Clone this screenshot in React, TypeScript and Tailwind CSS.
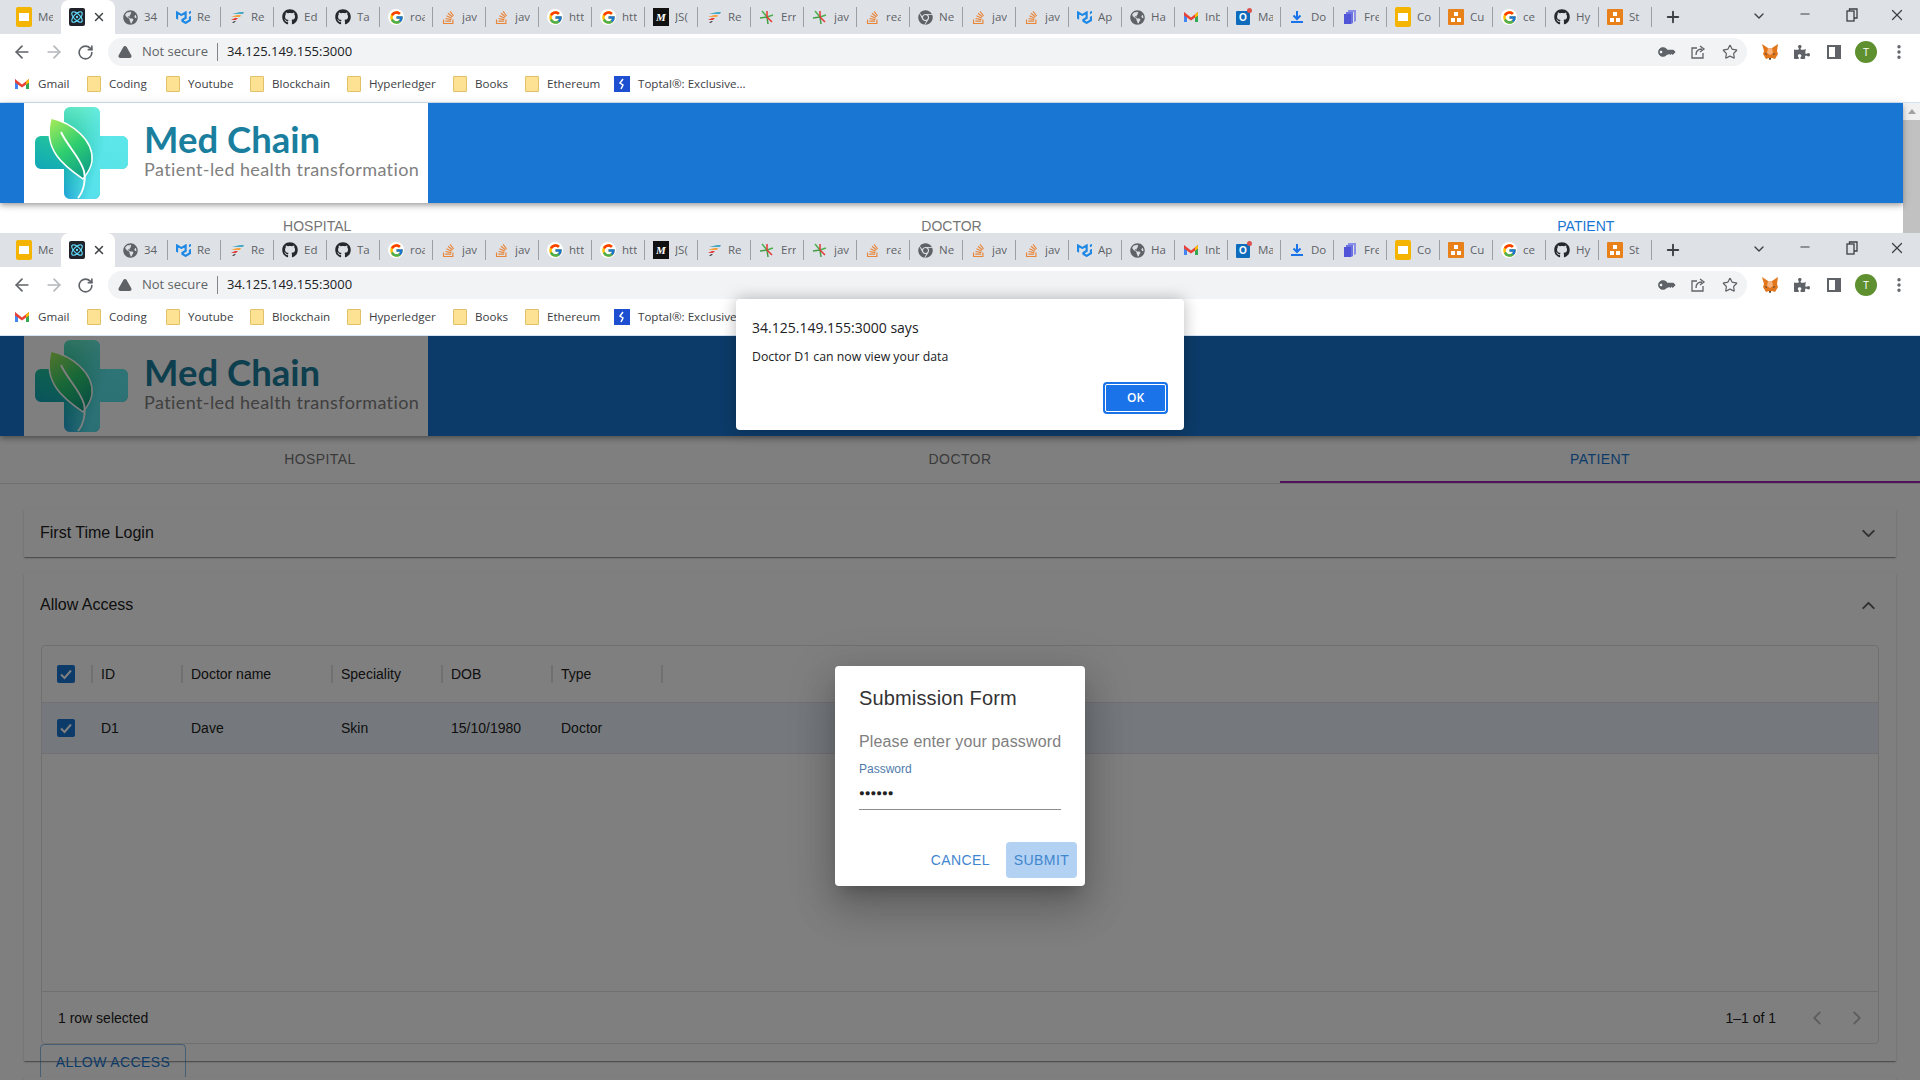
import React from 'react';
import { ArrowLeft, ArrowRight, Atom, ChevronDown, ChevronLeft, ChevronRight, ChevronUp, EllipsisVertical, Minus, Plus, RotateCw, Star, TriangleAlert, X } from 'lucide-react';
import { FaChrome, FaGithub, FaGlobeAmericas, FaKey, FaPuzzlePiece, FaStackOverflow } from 'react-icons/fa';
import { FcGoogle } from 'react-icons/fc';
import { SiMui } from 'react-icons/si';

const tabs: [string, string][] = [
    ['slides', 'Me'], ['react', ''], ['globe', '34'], ['mui', 'Re'], ['flag', 'Re'], ['github', 'Ed'], ['github', 'Ta'], ['google', 'roa'],
    ['so', 'jav'], ['so', 'jav'], ['google', 'htt'], ['google', 'htt'], ['medium', 'JS('], ['flag', 'Re'], ['spark', 'Err'], ['spark', 'jav'],
    ['so', 'rea'], ['chrome', 'Ne'], ['so', 'jav'], ['so', 'jav'], ['mui', 'Ap'], ['globe', 'Ha'], ['gmail', 'Inb'], ['outlook', 'Ma'],
    ['download', 'Do'], ['stack', 'Fre'], ['slides', 'Co'], ['blocks', 'Cu'], ['google', 'ce'], ['github', 'Hy'], ['blocks', 'St'],
];

const bookmarks = [
    { label: 'Coding', width: 'w-[79px]' },
    { label: 'Youtube', width: 'w-[84px]' },
    { label: 'Blockchain', width: 'w-[97px]' },
    { label: 'Hyperledger', width: 'w-[106px]' },
    { label: 'Books', width: 'w-[72px]' },
    { label: 'Ethereum', width: 'w-[89px]' },
];

function GmailIcon() {
    return (
        <svg viewBox="0 0 16 16" className="w-4 h-4">
            <path d="M1 3v10h3V7z" fill="#4285f4" />
            <path d="M15 3v10h-3V7z" fill="#34a853" />
            <path d="M1 3l7 5.500L15 3v3.500l-7 5-7-5z" fill="#ea4335" />
            <path d="M12 5.500L15 3v3.500l-3 2.200z" fill="#fbbc04" />
        </svg>
    );
}

function Favicon({ kind }: { kind: string }) {
    switch (kind) {
        case 'slides':
            return <div className="w-4 h-5 rounded-[2px] bg-[#f4b400] flex items-center justify-center"><div className="w-[10px] h-2 bg-white" /></div>;
        case 'react':
            return <div className="w-4 h-[18px] rounded-[2px] bg-[#20232a] flex items-center justify-center"><Atom size={14} color="#61dafb" /></div>;
        case 'globe':
            return <FaGlobeAmericas size={15} color="#5f6368" />;
        case 'mui':
            return <SiMui size={15} color="#1e88e5" />;
        case 'flag':
            return (
                <svg viewBox="0 0 16 16" className="w-4 h-4">
                    <path d="M3 5l8-2h4l-1 2z" fill="#48a9c5" />
                    <path d="M2 8l6-2h4l-1 2z" fill="#f4a340" />
                    <path d="M2 11l4-2h3l-2 2z" fill="#e53935" />
                    <path d="M3 14l2-2h2l-2 2z" fill="#555555" />
                </svg>
            );
        case 'github':
            return <FaGithub size={16} color="#24292e" />;
        case 'google':
            return <div className="w-4 h-4 rounded-full bg-white flex items-center justify-center"><FcGoogle size={15} /></div>;
        case 'so':
            return <FaStackOverflow size={15} color="#e8863a" />;
        case 'medium':
            return <div className="w-4 h-[18px] bg-[#111111] flex items-center justify-center text-white text-[11px] italic font-bold font-['Liberation_Serif',serif]">M</div>;
        case 'spark':
            return (
                <svg viewBox="0 0 16 16" className="w-4 h-4" fill="none" strokeWidth="1.500">
                    <path d="M8 8L3 2M8 8l6-2" stroke="#4caf50" />
                    <path d="M8 8L1 9M8 8l1 7" stroke="#43a047" />
                    <path d="M8 8l5 5M8 8L8 2" stroke="#e53935" />
                </svg>
            );
        case 'chrome':
            return <FaChrome size={15} color="#5f6368" />;
        case 'gmail':
            return <GmailIcon />;
        case 'outlook':
            return (
                <div className="w-4 h-4 relative">
                    <div className="w-[14px] h-[14px] mt-[2px] bg-[#0f6cbd] rounded-[1px] text-white text-[10px] font-bold leading-[14px] text-center font-['Liberation_Sans',sans-serif]">O</div>
                    <div className="absolute -top-px right-0 w-[5px] h-[5px] rounded-full bg-[#d9534f]" />
                </div>
            );
        case 'download':
            return (
                <svg viewBox="0 0 16 16" className="w-4 h-4">
                    <path d="M8 2v7M4.500 6.500L8 10l3.500-3.500" fill="none" stroke="#1a73e8" strokeWidth="2" />
                    <path d="M2 13h12" stroke="#1a73e8" strokeWidth="2" />
                </svg>
            );
        case 'stack':
            return (
                <svg viewBox="0 0 16 16" className="w-4 h-4">
                    <path d="M6 1h8v11l-2 1V3H6z" fill="#8a8fe8" />
                    <path d="M4 3h7v11l-2 1V5H4z" fill="#6d72e0" />
                    <rect x="2" y="5" width="7" height="10" fill="#4f55d6" />
                </svg>
            );
        case 'blocks':
            return (
                <svg viewBox="0 0 16 16" className="w-4 h-[18px]">
                    <rect width="16" height="16" rx="1" fill="#e8811a" />
                    <path d="M6 3h4v4H6zM3 9h4v4H3zM9 9h4v4H9z" fill="#ffffff" />
                </svg>
            );
        default:
            return null;
    }
}

function TabStrip() {
    return (
        <div className="h-[34px] bg-[#dee1e6] flex pl-2">
            {tabs.map(([kind, title], i) => {
                const active = kind === 'react';
                const beforeActive = i === 0;
                return (
                    <div key={i} className={active ? 'w-[54px] h-[34px] shrink-0 bg-white rounded-t-lg flex items-center pl-2' : 'w-[53px] h-[34px] shrink-0 flex items-center pl-2 relative'}>
                        <Favicon kind={kind} />
                        {active ? (
                            <X size={14} strokeWidth={2.500} className="ml-[7px] text-[#3c4043]" />
                        ) : (
                            <span className="ml-[6px] w-[15px] overflow-hidden whitespace-nowrap text-[11.500px] text-[#5f6368] font-['Open_Sans',sans-serif]">{title}</span>
                        )}
                        {!active && !beforeActive && <div className="absolute right-0 top-[7px] w-px h-5 bg-[#9aa0a6]" />}
                    </div>
                );
            })}
            <div className="w-9 ml-[3px] flex items-center justify-center">
                <Plus size={18} strokeWidth={2.500} className="text-[#3c4043]" />
            </div>
            <div className="ml-auto flex text-[#3c4043]">
                <div className="w-[46px] flex justify-center pt-2"><ChevronDown size={16} /></div>
                <div className="w-[46px] flex justify-center pt-[7px]"><Minus size={14} /></div>
                <div className="w-[46px] flex justify-center pt-2">
                    <svg viewBox="0 0 12 14" className="w-3 h-[14px] ml-[1px]" fill="none" stroke="#3c4043" strokeWidth="1.300">
                        <rect x="1" y="3" width="7" height="10" />
                        <path d="M3.500 3V1H11v9H8" />
                    </svg>
                </div>
                <div className="w-[46px] flex justify-center pt-[6px]"><X size={18} strokeWidth={1.600} /></div>
            </div>
        </div>
    );
}

function FoxIcon() {
    return (
        <svg viewBox="0 0 18 18" className="w-[18px] h-[18px]">
            <path d="M1 1l6 4h4l6-4-1 7 1 3-3 5-3-1H8l-3 1-3-5 1-3z" fill="#e2761b" />
            <path d="M7 5h4l1 5-3 2-3-2z" fill="#f6b27a" />
            <path d="M8 15h2l-.500 2h-1z" fill="#3c2a1d" />
            <path d="M4 10l2 1-1 1zM14 10l-2 1 1 1z" fill="#233447" />
        </svg>
    );
}

function Toolbar() {
    return (
        <div className="h-9 bg-white flex items-center">
            <div className="w-[108px] shrink-0 flex items-center pl-3 gap-[12px]">
                <ArrowLeft size={20} className="text-[#5f6368]" />
                <ArrowRight size={20} className="text-[#b4b7bb]" />
                <RotateCw size={17} strokeWidth={2.300} className="text-[#5f6368] ml-[1px]" />
            </div>
            <div className="w-[1639px] h-7 shrink-0 rounded-full bg-[#f1f3f4] flex items-center pl-[10px] pr-[9px] font-['Open_Sans',sans-serif]">
                <TriangleAlert size={14} strokeWidth={2.500} fill="#5f6368" className="text-[#5f6368]" />
                <span className="ml-[10px] w-[67px] text-[13px] text-[#5f6368] whitespace-nowrap">Not secure</span>
                <div className="ml-2 w-px h-[18px] bg-[#80868b]" />
                <span className="ml-[9px] text-[13px] text-[#202124] whitespace-nowrap">34.125.149.155:3000</span>
                <div className="ml-auto flex items-center gap-4 text-[#5f6368]">
                    <FaKey size={14} className="-scale-x-100 -rotate-45 -ml-[2px] mr-[1px]" />
                    <svg viewBox="0 0 16 16" className="w-4 h-4" fill="none" stroke="#5f6368" strokeWidth="1.300">
                        <path d="M13 9v5H2V4h5" />
                        <path d="M6 11c0-4 2-6 6-6M10 2l4 3-4 3" />
                    </svg>
                    <Star size={16} strokeWidth={1.800} />
                </div>
            </div>
            <div className="flex-1 flex items-center pl-[14px] gap-[15px] text-[#5f6368]">
                <FoxIcon />
                <FaPuzzlePiece size={16} />
                <svg viewBox="0 0 16 16" className="w-4 h-4 ml-[1px]" fill="none">
                    <rect x="2" y="2" width="12" height="12" stroke="#5f6368" strokeWidth="2" />
                    <rect x="9" y="2" width="5" height="12" fill="#5f6368" />
                </svg>
                <div className="w-[22px] h-[22px] -ml-[2px] rounded-full bg-[#5e9030] text-white text-[11px] flex items-center justify-center font-['Open_Sans',sans-serif]">T</div>
                <EllipsisVertical size={18} strokeWidth={2.500} className="-ml-[2px]" />
            </div>
        </div>
    );
}

function BookmarksBar() {
    return (
        <div className="h-[33px] pb-[4px] bg-white border-b border-[#d4e4f5] flex items-center pl-[14px] text-[11.600px] text-[#3c4043] font-['Open_Sans',sans-serif] whitespace-nowrap">
            <div className="w-[73px] flex items-center gap-[8px]"><GmailIcon /><span>Gmail</span></div>
            {bookmarks.map((b) => (
                <div key={b.label} className={`${b.width} flex items-center gap-2`}>
                    <div className="w-[14px] h-4 bg-[#fde293] border border-[#e0c068] rounded-[1px]" />
                    <span>{b.label}</span>
                </div>
            ))}
            <div className="flex items-center gap-2">
                <div className="w-4 h-4 bg-[#1f4fd1] flex items-center justify-center">
                    <svg viewBox="0 0 16 16" className="w-4 h-4" fill="none" stroke="#ffffff" strokeWidth="1.500">
                        <path d="M9 3L6 7l3 2-2 4" />
                    </svg>
                </div>
                <span>Toptal®: Exclusive...</span>
            </div>
        </div>
    );
}

const crossPath = 'M36 0h24a6 6 0 0 1 6 6v23h22a6 6 0 0 1 6 6v21a6 6 0 0 1-6 6H66v24a6 6 0 0 1-6 6H36a6 6 0 0 1-6-6V62H7a6 6 0 0 1-6-6V35a6 6 0 0 1 6-6h23V6a6 6 0 0 1 6-6z';

function Logo({ id }: { id: string }) {
    return (
        <div className="ml-6 w-[404px] h-[100px] bg-white flex items-center pl-[10px]">
            <svg viewBox="0 0 94 92" className="w-[94px] h-[92px] shrink-0">
                <defs>
                    <linearGradient id={`${id}-cross`} x1="0.700" y1="0" x2="0.300" y2="1">
                        <stop offset="0" stopColor="#6ff0d0" />
                        <stop offset="0.500" stopColor="#1fc0a0" />
                        <stop offset="0.800" stopColor="#12a8b8" />
                        <stop offset="1" stopColor="#0a86d0" />
                    </linearGradient>
                    <linearGradient id={`${id}-glow`} x1="0" y1="0" x2="1" y2="0.300">
                        <stop offset="0.450" stopColor="#5fe8f0" stopOpacity="0" />
                        <stop offset="0.800" stopColor="#5fe8f0" stopOpacity="0.900" />
                    </linearGradient>
                    <linearGradient id={`${id}-leaf`} x1="0.200" y1="0" x2="0.700" y2="1">
                        <stop offset="0" stopColor="#9be85a" />
                        <stop offset="0.500" stopColor="#2fcf70" />
                        <stop offset="1" stopColor="#0fa088" />
                    </linearGradient>
                </defs>
                <path d={crossPath} fill={`url(#${id}-cross)`} />
                <path d={crossPath} fill={`url(#${id}-glow)`} />
                <path d="M17 11C38 16 60 33 58 54 57 62 53 67 49 72 32 60 8 44 17 11z" fill={`url(#${id}-leaf)`} stroke="#ffffff" strokeWidth="1.500" />
                <path d="M27 25C34 40 46 50 50 64 52 72 50 84 44 91" fill="none" stroke="#ffffff" strokeWidth="1.800" />
            </svg>
            <div className="ml-4 -mt-[8px] font-['Lato',sans-serif]">
                <div className="text-[36.500px] leading-[40px] font-bold text-[#1a7f9e] whitespace-nowrap">Med Chain</div>
                <div className="text-[18px] leading-[20px] tracking-[0.4px] text-[#808080] whitespace-nowrap">Patient-led health transformation</div>
            </div>
        </div>
    );
}

function PageHeader({ id }: { id: string }) {
    return (
        <div className="h-[100px] bg-[#1976d2] flex shadow-[0_2px_4px_-1px_rgba(0,0,0,0.2),0_4px_5px_0_rgba(0,0,0,0.14),0_1px_10px_0_rgba(0,0,0,0.12)] relative">
            <Logo id={id} />
        </div>
    );
}

function NavTabs({ short }: { short?: boolean }) {
    return (
        <div className={short ? 'flex h-[30px] pt-[13px] text-sm leading-5 text-[#757575]' : 'flex h-12 items-center pb-[2px] border-b border-[#e0e0e0] text-sm text-[#757575] tracking-[0.4px] relative'}>
            <div className="flex-1 text-center">HOSPITAL</div>
            <div className="flex-1 text-center">DOCTOR</div>
            <div className="flex-1 text-center text-[#1976d2]">PATIENT</div>
            {!short && <div className="absolute right-0 bottom-0 w-1/3 h-[2px] bg-[#9c27b0]" />}
        </div>
    );
}

const paperShadow = 'shadow-[0_2px_1px_-1px_rgba(0,0,0,0.2),0_1px_1px_0_rgba(0,0,0,0.14),0_1px_3px_0_rgba(0,0,0,0.12)]';

function CheckBox() {
    return (
        <div className="w-[18px] h-[18px] rounded-[2px] bg-[#1976d2] flex items-center justify-center">
            <svg viewBox="0 0 18 18" className="w-[18px] h-[18px]" fill="none" stroke="#ffffff" strokeWidth="2">
                <path d="M4 9.500l3.500 3.500L14 5.500" />
            </svg>
        </div>
    );
}

const columns = [
    { title: 'ID', value: 'D1', width: 'w-[90px]' },
    { title: 'Doctor name', value: 'Dave', width: 'w-[150px]' },
    { title: 'Speciality', value: 'Skin', width: 'w-[110px]' },
    { title: 'DOB', value: '15/10/1980', width: 'w-[110px]' },
    { title: 'Type', value: 'Doctor', width: 'w-[110px]' },
];

function AccessTable() {
    return (
        <div className="mx-[17px] h-[399px] border border-[#e0e0e0] rounded flex flex-col text-sm text-[#212121]">
            <div className="h-[57px] flex items-center border-b border-[#e0e0e0]">
                <div className="w-[49px] pl-[15px]"><CheckBox /></div>
                {columns.map((c) => (
                    <div key={c.title} className={`${c.width} h-[18px] border-l-2 border-[#e0e0e0] pl-[8px] leading-[18px]`}>{c.title}</div>
                ))}
                <div className="h-[18px] border-l-2 border-[#e0e0e0]" />
            </div>
            <div className="h-[51px] flex items-center border-b border-[#e0e0e0] bg-[#ebf3fb]">
                <div className="w-[49px] pl-[15px]"><CheckBox /></div>
                {columns.map((c) => (
                    <div key={c.title} className={`${c.width} pl-[10px] -mt-px`}>{c.value}</div>
                ))}
            </div>
            <div className="flex-1" />
            <div className="h-[52px] border-t border-[#e0e0e0] flex items-center pl-4 pr-[10px]">
                <span>1 row selected</span>
                <span className="ml-auto">1–1 of 1</span>
                <ChevronLeft size={22} className="ml-[30px] text-[#bdbdbd]" />
                <ChevronRight size={22} className="ml-[18px] text-[#bdbdbd]" />
            </div>
        </div>
    );
}

function PatientPanel() {
    return (
        <div className="px-6 pt-[25px]">
            <div className={`h-12 bg-white flex items-center justify-between pl-4 pr-[17px] text-base text-[#212121] ${paperShadow}`}>
                <span>First Time Login</span>
                <ChevronDown size={21} strokeWidth={2.200} className="text-[#616161]" />
            </div>
            <div className={`mt-4 h-[488px] bg-white ${paperShadow}`}>
                <div className="h-[72px] flex items-center justify-between pl-4 pr-[17px] text-base text-[#212121]">
                    <span className="-mt-[9px]">Allow Access</span>
                    <ChevronUp size={21} strokeWidth={2.200} className="-mt-[8px] text-[#616161]" />
                </div>
                <AccessTable />
                <div className="ml-4 w-[146px] h-9 border border-[#1976d280] rounded flex items-center justify-center text-sm text-[#1976d2] tracking-[0.4px]">
                    ALLOW ACCESS
                </div>
            </div>
            <div className={`mt-4 h-12 bg-white ${paperShadow}`} />
        </div>
    );
}

function SubmissionDialog() {
    return (
        <div className="absolute inset-0 bg-black/50 flex justify-center pt-[330px]">
            <div className="w-[250px] h-[220px] bg-white rounded flex flex-col shadow-[0_11px_15px_-7px_rgba(0,0,0,0.2),0_24px_38px_3px_rgba(0,0,0,0.14),0_9px_46px_8px_rgba(0,0,0,0.12)]">
                <div className="pl-6 pt-4 text-xl leading-8 tracking-[0.15px] text-[#333333]">Submission Form</div>
                <div className="pl-6 pt-4 text-base leading-6 tracking-[0.15px] text-[#808080] whitespace-nowrap">Please enter your password</div>
                <div className="pl-6 pt-2 text-xs leading-[14px] text-[#4f7bab]">Password</div>
                <div className="mx-6 h-[34px] pt-[6px] border-b border-[#8c8c8c] text-[#212121] text-[9.500px] leading-[22px]">●●●●●●</div>
                <div className="mt-auto mb-2 mr-2 flex justify-end items-center gap-4 text-sm text-[#3f86cf] tracking-[0.4px]">
                    <div className="h-9 flex items-center justify-center">CANCEL</div>
                    <div className="h-9 w-[71px] rounded bg-[#b3d1f2] flex items-center justify-center">SUBMIT</div>
                </div>
            </div>
        </div>
    );
}

function AlertBox() {
    return (
        <div className="absolute left-[736px] top-[299px] w-[448px] h-[131px] bg-white rounded-[4px] shadow-[0_0_16px_rgba(0,0,0,0.28)] pl-4 pr-4 pt-4 font-['Open_Sans',sans-serif] text-[#202124]">
            <div className="text-sm leading-[26px]">34.125.149.155:3000 says</div>
            <div className="text-[12.300px] leading-[20px] mt-[6px]">Doctor D1 can now view your data</div>
            <div className="absolute right-4 bottom-4 w-[65px] h-[32px] rounded bg-[#1a73e8] border-2 border-[#1a73e8] outline-1 -outline-offset-3 outline-white text-white text-xs font-semibold flex items-center justify-center">
                OK
            </div>
        </div>
    );
}

export default function App() {
    return (
        <div className="relative w-[1920px] h-[1080px] overflow-hidden bg-white font-['Liberation_Sans',Arial,sans-serif]">
            {/* first browser capture, cut off by the second one */}
            <div className="h-[233px] overflow-hidden">
                <TabStrip />
                <Toolbar />
                <BookmarksBar />
                <div className="flex h-[130px]">
                    <div className="w-[1903px]">
                        <PageHeader id="top" />
                        <NavTabs short />
                    </div>
                    <div className="w-[17px] bg-[#f1f1f1] flex flex-col items-center">
                        <div className="h-[17px] pt-[6px]">
                            <div className="w-0 h-0 border-x-4 border-x-transparent border-b-[5px] border-b-[#a3a3a3]" />
                        </div>
                        <div className="w-full flex-1 bg-[#c1c1c1]" />
                    </div>
                </div>
            </div>
            {/* second browser capture */}
            <div className="h-[847px] flex flex-col">
                <TabStrip />
                <Toolbar />
                <BookmarksBar />
                <div className="relative flex-1 overflow-hidden bg-white">
                    <PageHeader id="main" />
                    <NavTabs />
                    <PatientPanel />
                    <SubmissionDialog />
                </div>
            </div>
            <AlertBox />
        </div>
    );
}
